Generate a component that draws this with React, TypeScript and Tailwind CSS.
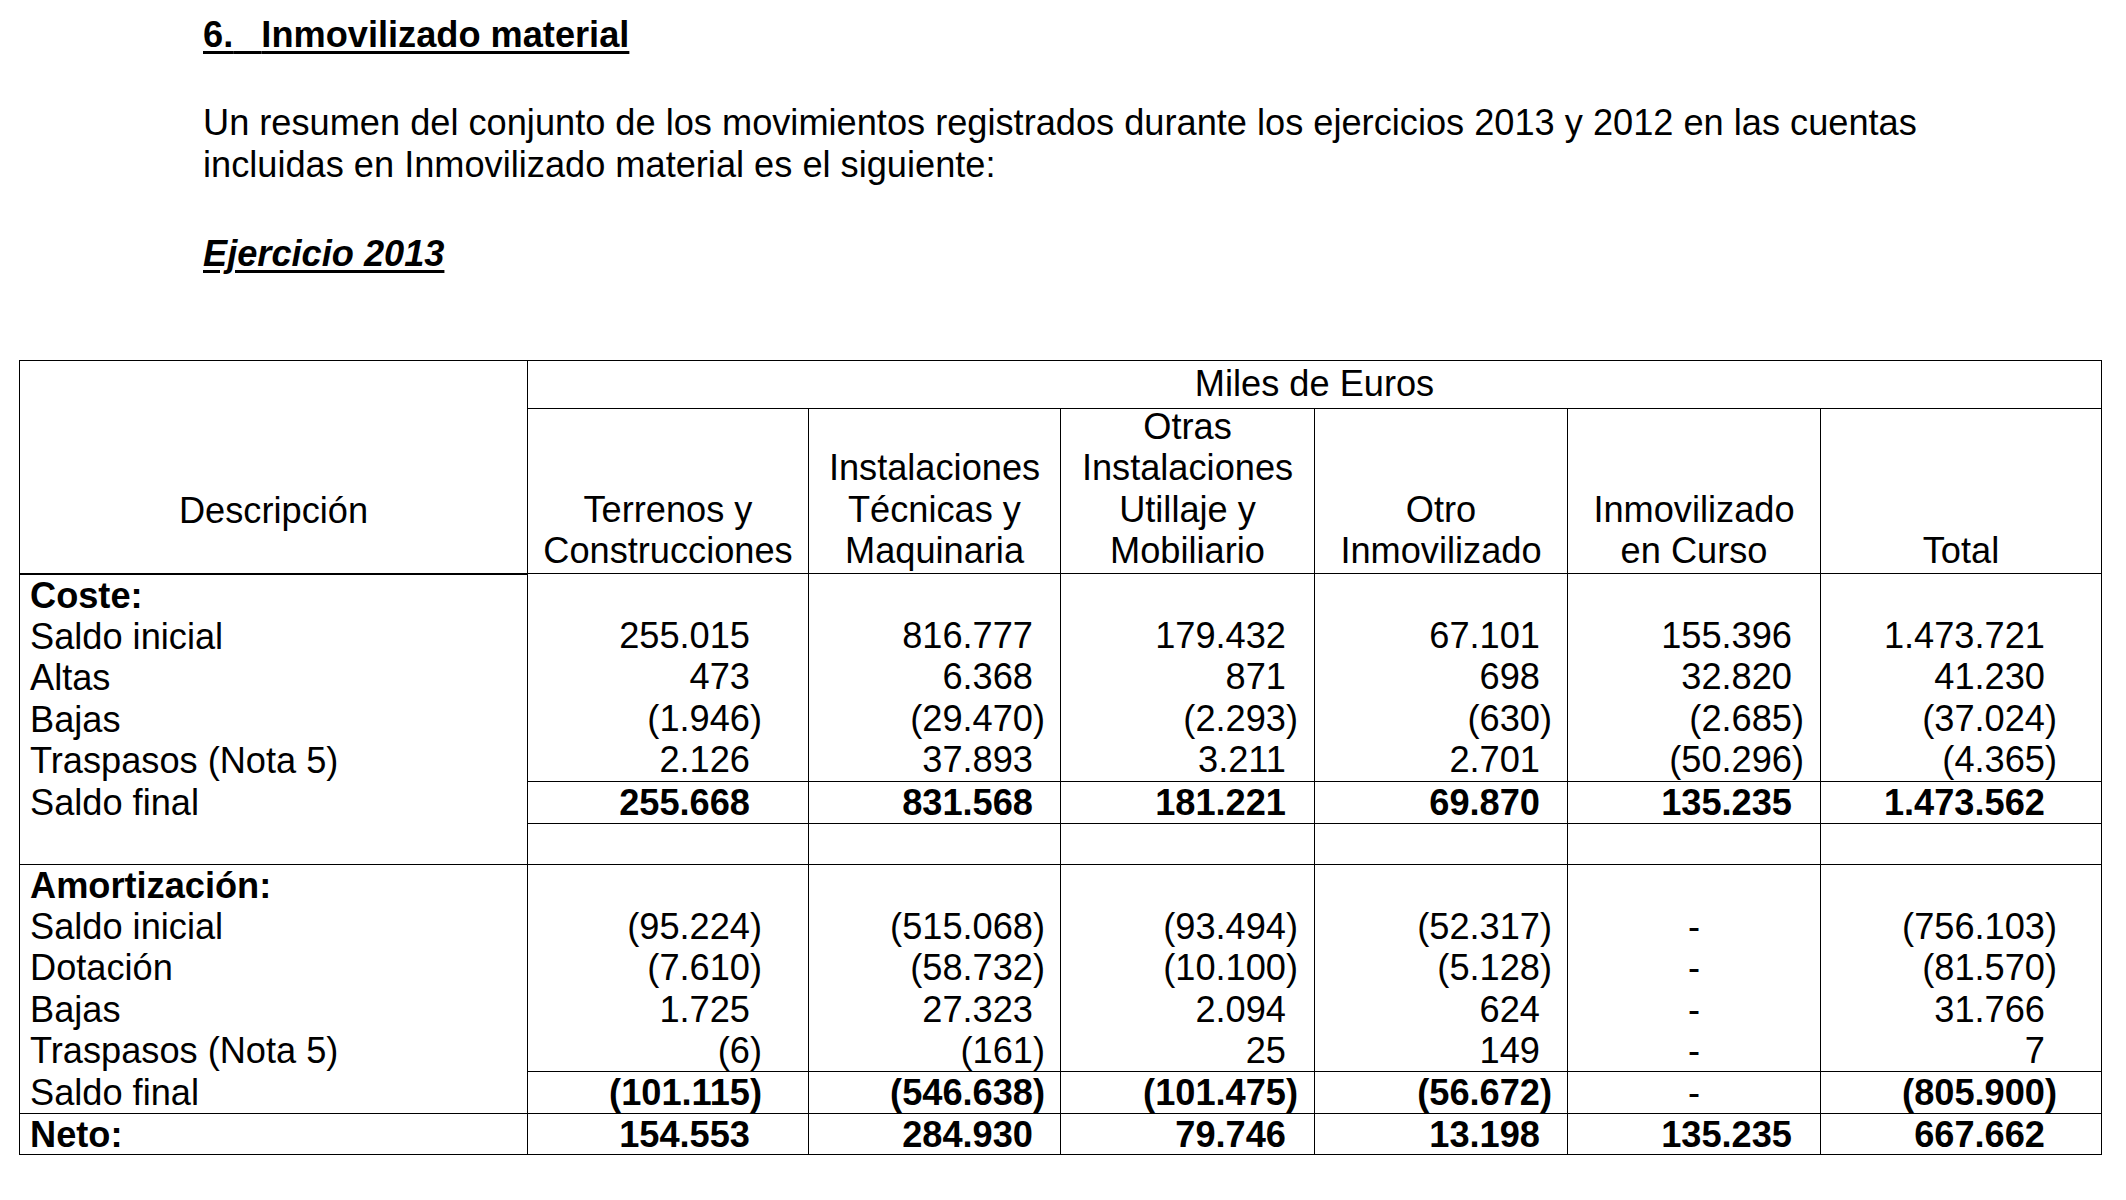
import React from 'react'

type Col = {
    title: React.ReactNode
    pr: string
    coste: string[]
    costeFinal: string
    amort: string[]
    amortFinal: string
    neto: string
}

const cols: Col[] = [
    {
        title: <>Terrenos y<br />Construcciones</>,
        pr: 'pr-[46px]',
        coste: ['', '255.015', '473', '(1.946)', '2.126'],
        costeFinal: '255.668',
        amort: ['', '(95.224)', '(7.610)', '1.725', '(6)'],
        amortFinal: '(101.115)',
        neto: '154.553',
    },
    {
        title: <>Instalaciones<br />Técnicas y<br />Maquinaria</>,
        pr: 'pr-[15px]',
        coste: ['', '816.777', '6.368', '(29.470)', '37.893'],
        costeFinal: '831.568',
        amort: ['', '(515.068)', '(58.732)', '27.323', '(161)'],
        amortFinal: '(546.638)',
        neto: '284.930',
    },
    {
        title: <>Otras<br />Instalaciones<br />Utillaje y<br />Mobiliario</>,
        pr: 'pr-[16px]',
        coste: ['', '179.432', '871', '(2.293)', '3.211'],
        costeFinal: '181.221',
        amort: ['', '(93.494)', '(10.100)', '2.094', '25'],
        amortFinal: '(101.475)',
        neto: '79.746',
    },
    {
        title: <>Otro<br />Inmovilizado</>,
        pr: 'pr-[15px]',
        coste: ['', '67.101', '698', '(630)', '2.701'],
        costeFinal: '69.870',
        amort: ['', '(52.317)', '(5.128)', '624', '149'],
        amortFinal: '(56.672)',
        neto: '13.198',
    },
    {
        title: <>Inmovilizado<br />en Curso</>,
        pr: 'pr-[16px]',
        coste: ['', '155.396', '32.820', '(2.685)', '(50.296)'],
        costeFinal: '135.235',
        amort: ['', '-', '-', '-', '-'],
        amortFinal: '-',
        neto: '135.235',
    },
    {
        title: <>Total</>,
        pr: 'pr-[44px]',
        coste: ['', '1.473.721', '41.230', '(37.024)', '(4.365)'],
        costeFinal: '1.473.562',
        amort: ['', '(756.103)', '(81.570)', '31.766', '7'],
        amortFinal: '(805.900)',
        neto: '667.662',
    },
]

// numbers line up on the digits, the closing bracket hangs to the right
const Num = ({ v, pr }: { v: string; pr: string }) => {
    if (v === '') return <div className="h-[41.4px]" />
    if (v === '-') return <div className="text-center font-normal">-</div>
    const neg = v.endsWith(')')
    return (
        <div className={`text-right ${pr}`}>
            {v}
            {!neg && <span className="invisible">)</span>}
        </div>
    )
}

const cell = 'border-l border-t border-black'

export default function App() {
    return (
        <div className="min-h-screen bg-white text-black font-['Liberation_Sans',Arial,sans-serif] text-[36.2px] leading-[41.4px]">
            <div className="pl-[203px] pt-[14px]">
                <h1 className="font-bold underline decoration-[3px] underline-offset-[4px] whitespace-pre">6.{'\u2002 '}Inmovilizado material</h1>
                <p className="mt-[47px]">
                    Un resumen del conjunto de los movimientos registrados durante los ejercicios 2013 y 2012 en las cuentas
                    <br />
                    incluidas en Inmovilizado material es el siguiente:
                </p>
                <h2 className="mt-[48px] font-bold italic underline decoration-[3px] underline-offset-[4px]">Ejercicio 2013</h2>
            </div>

            <div className="ml-[19px] mt-[85px] w-fit border border-black grid grid-cols-[507px_281px_252px_254px_253px_253px_281px] grid-rows-[47px_165px_208px_42px_41px_207px_42px_41px]">
                {/* header */}
                <div className="row-span-2 flex flex-col justify-end items-center pb-[41px]">Descripción</div>
                <div className="col-span-6 border-l border-black flex items-center justify-center">Miles de Euros</div>
                {cols.map((c, i) => (
                    <div key={'h' + i} className={`${cell} flex flex-col justify-end text-center pb-[1px]`}>
                        <div>{c.title}</div>
                    </div>
                ))}

                {/* coste */}
                <div className="row-span-3 border-t-2 border-black pl-[10px]">
                    <div className="font-bold">Coste:</div>
                    <div>Saldo inicial</div>
                    <div>Altas</div>
                    <div>Bajas</div>
                    <div>Traspasos (Nota 5)</div>
                    <div>Saldo final</div>
                </div>
                {cols.map((c, i) => (
                    <div key={'c' + i} className={cell}>
                        {c.coste.map((v, j) => <Num key={j} v={v} pr={c.pr} />)}
                    </div>
                ))}
                {cols.map((c, i) => (
                    <div key={'cf' + i} className={`${cell} font-bold`}>
                        <Num v={c.costeFinal} pr={c.pr} />
                    </div>
                ))}
                {cols.map((_, i) => (
                    <div key={'e' + i} className={cell} />
                ))}

                {/* amortizacion */}
                <div className="row-span-2 border-t border-black pl-[10px]">
                    <div className="font-bold">Amortización:</div>
                    <div>Saldo inicial</div>
                    <div>Dotación</div>
                    <div>Bajas</div>
                    <div>Traspasos (Nota 5)</div>
                    <div>Saldo final</div>
                </div>
                {cols.map((c, i) => (
                    <div key={'a' + i} className={cell}>
                        {c.amort.map((v, j) => <Num key={j} v={v} pr={c.pr} />)}
                    </div>
                ))}
                {cols.map((c, i) => (
                    <div key={'af' + i} className={`${cell} font-bold`}>
                        <Num v={c.amortFinal} pr={c.pr} />
                    </div>
                ))}

                {/* neto */}
                <div className="border-t border-black pl-[10px] font-bold">Neto:</div>
                {cols.map((c, i) => (
                    <div key={'n' + i} className={`${cell} font-bold`}>
                        <Num v={c.neto} pr={c.pr} />
                    </div>
                ))}
            </div>
        </div>
    )
}
